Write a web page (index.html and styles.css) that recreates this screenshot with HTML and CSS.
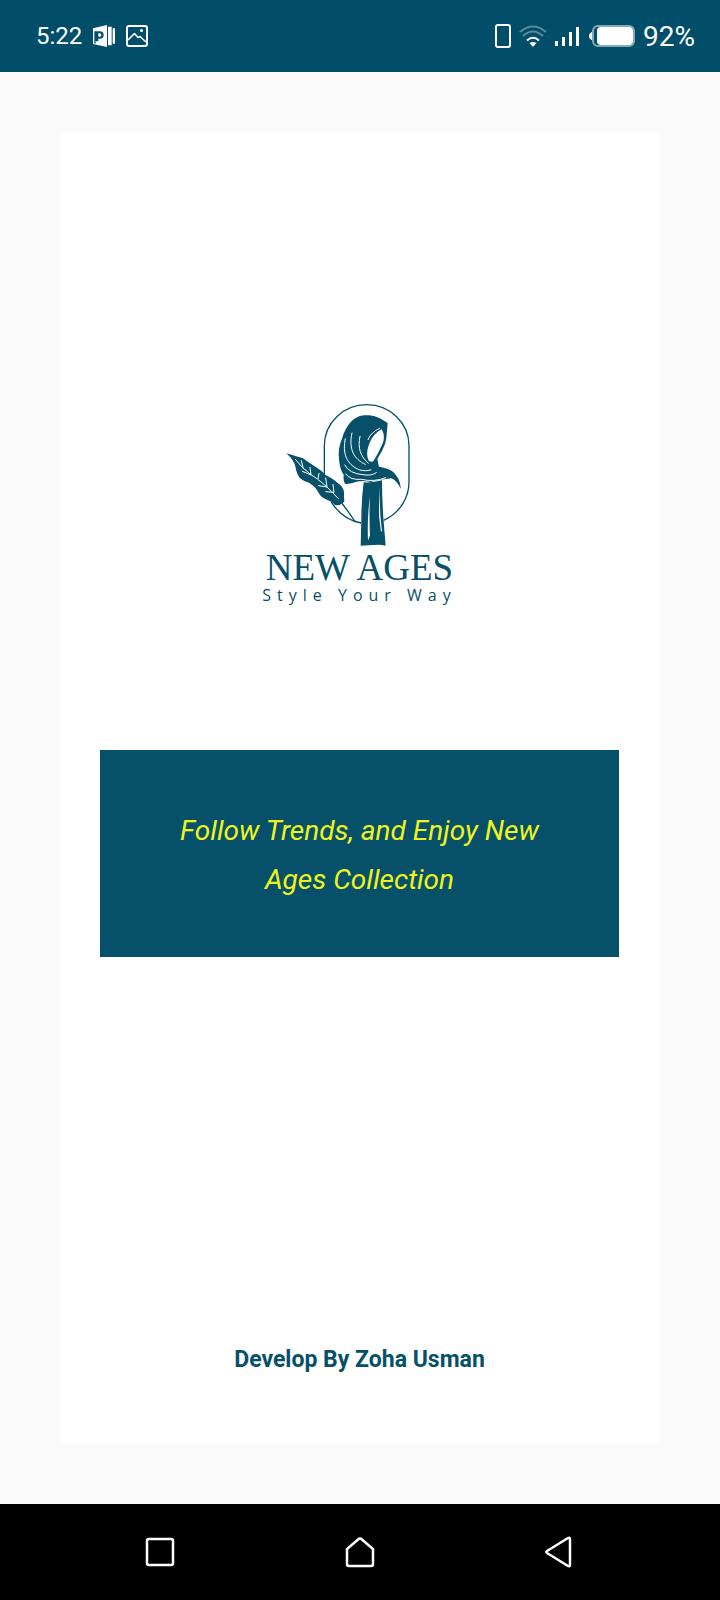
FILE: index.html
```html
<!DOCTYPE html>
<html lang="en">
<head>
<meta charset="utf-8">
<meta name="viewport" content="width=device-width, initial-scale=1">
<title>New Ages</title>
<link rel="stylesheet" href="styles.css">
</head>
<body>
<header class="status">
  <span class="clock">5:22</span>
  <svg width="22" height="22" viewBox="0 0 66 66" aria-hidden="true">
    <path fill="#fff" fill-rule="evenodd" d="M0 10L42 0V66L0 57ZM4 19V48L8 49V56L4 55V48H8V19ZM8 19V49H16V41H20Q32 41 32 30Q32 19 20 19ZM16 25H20Q25 25 25 30Q25 35 20 35H16Z"/>
    <path fill="#fff" d="M45 5H56V61H45ZM59 10H66V56H59Z"/>
  </svg>
  <svg width="22" height="22" viewBox="0 0 22 22" fill="none" stroke="#fff" stroke-width="2" stroke-linejoin="round" aria-hidden="true">
    <rect x="1" y="1" width="20" height="20" rx="2"/>
    <path d="M2 15L8.500 8.500L12 12.500L14 11.500L20 17" stroke-width="1.600"/>
    <circle cx="15.500" cy="5.500" r="1.500" fill="#fff" stroke="none"/>
  </svg>
  <div class="indicators">
    <svg width="16" height="24" viewBox="0 0 16 24" aria-hidden="true"><rect x="1" y="1" width="14" height="22" rx="2" fill="none" stroke="#fff" stroke-width="2"/></svg>
    <svg width="28" height="22" viewBox="0 0 28 22" fill="none" stroke="#fff" stroke-width="2" aria-hidden="true">
      <path d="M1 7Q14-4 27 7M4 11Q14 2 24 11" opacity=".35"/>
      <path d="M8 15.500Q14 10 20 15.500"/>
      <path d="M10.500 18Q14 16 17.500 18L14 22Z" fill="#fff" stroke="none"/>
    </svg>
    <svg width="24" height="20" viewBox="0 0 24 20" fill="#fff" aria-hidden="true"><path d="M0 15H3V20H0ZM7 11H10V20H7ZM14 6H17V20H14ZM21 1H24V20H21Z"/></svg>
    <svg class="battery" width="46" height="22" viewBox="0 0 46 22" aria-hidden="true">
      <path d="M3 7Q0 8 0 11Q0 14 3 15Z" fill="#fff"/>
      <rect x="4" y="1" width="41" height="20" rx="5" fill="none" stroke="#86a9b8" stroke-width="2"/>
      <rect x="8" y="2" width="36" height="18" rx="4" fill="#fff"/>
    </svg>
    <span class="charge">92%</span>
  </div>
</header>

<main class="screen">
  <section class="card">
    <div class="brand">
      <svg class="emblem" width="126" height="144" viewBox="106 38 378 432" aria-hidden="true">
        <path d="M224 260V166A127 123 0 0 1 478 166V270A128 127 0 0 1 402 390M334 398Q278 388 244 334" fill="none" stroke="#07506a" stroke-width="4"/>
        <path d="M276 338Q298 366 317 395" fill="none" stroke="#07506a" stroke-width="4"/>
        <g fill="#07506a">
          <path d="M110 189Q127 194 147 200L160 204Q180 219 203 233Q218 242 228 254Q250 264 272 284Q286 297 283 318L284 334L276 340Q266 347 256 344Q248 333 232 328Q214 323 206 306Q200 292 190 286L178 277Q163 273 153 265Q142 255 138 232Q134 210 110 189Z"/>
          <path d="M343 75C370 73 389 81 414 98L410 143C407 166 396 184 383 206L388 229Q412 232 428 243Q450 260 454 296Q440 269 425 264Q388 268 362 275Q334 268 308 278L288 282Q280 274 282 253Q270 238 268 206Q264 175 277 145C287 111 308 78 343 75Z"/>
          <path d="M342 276Q368 278 397 270Q397 325 401 382L408 466Q391 461 371 464L333 466L335 389Q335 330 342 276Z"/>
        </g>
        <g fill="#fff">
          <path d="M396 117C406 134 404 153 395 168Q387 188 371 213Q365 216 358 212C349 197 352 174 361 155Q373 128 396 117Z"/>
          <path d="M361 317Q352 383 355 451L361 435Q358 372 361 317ZM389 289L388 376L394 424L397 423L392 374Z"/>
        </g>
        <g fill="none" stroke="#fff" stroke-width="3" stroke-linecap="round">
          <path d="M390 114Q363 126 355 148M307 128C296 174 312 207 347 222M331 138C323 174 333 199 356 219M287 145C278 188 289 222 330 239Q347 244 364 239M285 224Q299 250 340 253Q365 258 380 247M288 251Q302 270 335 267Q375 276 408 262"/>
          <path d="M137 207Q156 233 184 253Q222 276 266 325M155 211L161 235M181 231L184 254L158 243M208 249L205 265M228 263L232 290L207 286M250 282L253 306L228 304"/>
        </g>
      </svg>
      <h1 class="name">NEW AGES</h1>
      <p class="tagline">Style Your Way</p>
    </div>
    <p class="banner">Follow Trends, and Enjoy New Ages Collection</p>
    <p class="credit">Develop By Zoha Usman</p>
  </section>
</main>

<nav class="navbar" aria-label="System">
  <button class="key" aria-label="Recent apps"><svg width="32" height="32" viewBox="0 0 32 32"><rect x="3" y="3" width="26" height="26" rx="2"/></svg></button>
  <button class="key" aria-label="Home"><svg width="32" height="32" viewBox="0 0 32 32"><path d="M16 2.500Q17 2.500 18 3.500L29 13V28Q29 30 27 30H5Q3 30 3 28V13L14 3.500Q15 2.500 16 2.500Z"/></svg></button>
  <button class="key" aria-label="Back"><svg width="32" height="32" viewBox="0 0 32 32"><path d="M26 3V29Q26 31 24 30L3 17Q1.500 16 3 15L24 2Q26 1 26 3Z"/></svg></button>
</nav>
</body>
</html>
```
FILE: styles.css
```css
* {
  box-sizing: border-box;
}

body {
  display: flex;
  flex-direction: column;
  min-height: 100vh;
  margin: 0;
  background: #fafafa;
  font-family: Roboto, "Liberation Sans", sans-serif;
}

h1,
p {
  margin: 0;
}

svg {
  display: block;
  flex: none;
}

.status {
  display: flex;
  align-items: center;
  gap: 11px;
  height: 72px;
  padding: 0 25px 0 36px;
  background: #004e69;
  color: #fff;
}

.clock {
  font-size: 24px;
}

.indicators {
  display: flex;
  align-items: center;
  gap: 8px;
  margin-left: auto;
}

.battery {
  margin-left: 2px;
}

.charge {
  font-size: 28px;
}

.screen {
  display: flex;
  flex: 1;
  padding: 60px;
}

.card {
  display: flex;
  flex: 1;
  flex-direction: column;
  align-items: center;
  padding: 271px 41px 69px 40px;
  background: #fff;
  color: #07506a;
}

.emblem {
  margin: 0 0 2px 23px;
}

.name {
  font: 400 37px/37px "Liberation Serif", serif;
  text-align: center;
}

.tagline {
  font: 400 16px/18px "Open Sans", "Noto Sans", sans-serif;
  letter-spacing: 6px;
}

.banner {
  width: 100%;
  margin-top: 146px;
  padding: 56px 70px 53px;
  background: #07506a;
  color: #eef51d;
  font-size: 28px;
  font-style: italic;
  line-height: 49px;
  text-align: center;
}

.credit {
  margin-top: auto;
  font-size: 23px;
  font-weight: 700;
  line-height: 30px;
}

.navbar {
  display: grid;
  grid-template-columns: repeat(3, 1fr);
  height: 96px;
  padding: 0 60px;
  background: #000;
}

.key {
  display: grid;
  place-items: center;
  padding: 0;
  border: 0;
  background: none;
}

.key svg {
  fill: none;
  stroke: #fff;
  stroke-width: 2.5;
}
```
